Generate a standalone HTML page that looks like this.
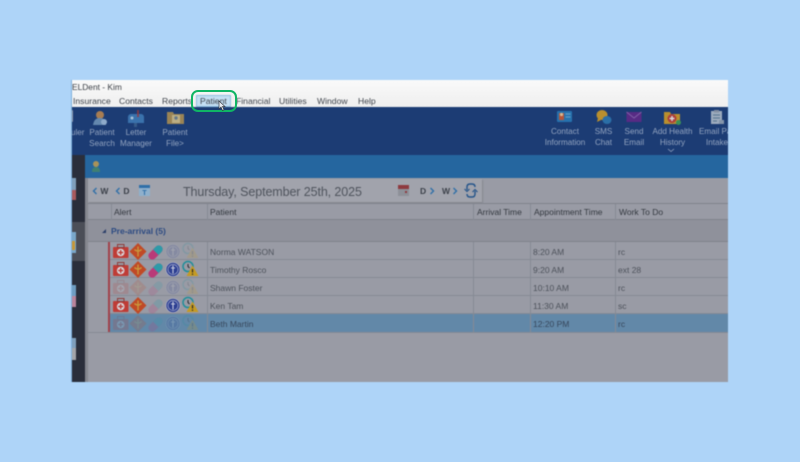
<!DOCTYPE html>
<html><head><meta charset="utf-8">
<style>
html,body{margin:0;padding:0}
body{width:800px;height:462px;background:#aed4f8;position:relative;overflow:hidden;font-family:"Liberation Sans",sans-serif}
.a{position:absolute}
#win{position:absolute;left:0;top:0;width:800px;height:462px;filter:blur(.55px)}
.t{position:absolute;white-space:nowrap;line-height:12px}
.m{font-size:8.6px;color:#3f444c;top:95px}
.tb{font-size:8.1px;color:#93a4c0;text-align:center;line-height:11px;transform:translateX(-50%);top:126.5px}
.h{font-size:8.5px;color:#33383f;top:206px}
.c{font-size:8.5px;color:#4d525b}
.row{position:absolute;left:110px;width:618px;height:18px;border-bottom:1px solid #868a94;box-sizing:border-box}
.v{position:absolute;width:1px;background:#868a94}
.nav{position:absolute;top:185px;font-size:8.5px;line-height:12px;font-weight:bold;color:#3b4049;white-space:nowrap}
.nav svg{vertical-align:-1px}
</style></head><body>
<div id="win">
<div class="a" style="left:71px;top:80px;width:657px;height:27px;background:linear-gradient(#fafafa,#f3f3f3 60%,#efefef)"></div>
<div class="t" style="left:72px;top:81px;font-size:8.4px;color:#3c4047">ELDent - Kim</div>
<div class="a" style="left:196px;top:95px;width:35px;height:12px;background:#c4dff3;border:1px solid #8fbfe0;box-sizing:border-box"></div>
<div class="t m" style="left:73px">Insurance</div>
<div class="t m" style="left:119px">Contacts</div>
<div class="t m" style="left:162px">Reports</div>
<div class="t m" style="left:200px">Patient</div>
<div class="t m" style="left:236px">Financial</div>
<div class="t m" style="left:279px">Utilities</div>
<div class="t m" style="left:317px">Window</div>
<div class="t m" style="left:358px">Help</div>

<div class="a" style="left:71px;top:107px;width:657px;height:49px;background:#1c3c74"></div>
<div class="a" style="left:85px;top:155px;width:643px;height:23px;background:#25669f"></div>
<div class="a" style="left:72px;top:155px;width:13px;height:227px;background:#2a2e3b"></div>
<div class="a" style="left:72px;top:222px;width:13px;height:39px;background:#4b4e57"></div>
<div class="a" style="left:85px;top:178px;width:643px;height:204px;background:#999ba5"></div>
<div class="a" style="left:85px;top:178px;width:3px;height:204px;background:#85878f"></div>
<div class="a" style="left:72px;top:178px;width:4px;height:13px;background:#7f9fbc"></div>
<div class="a" style="left:72px;top:190px;width:4px;height:10px;background:#a85a5e"></div>
<div class="a" style="left:72px;top:232px;width:4px;height:21px;background:#7aa7c9"></div>
<div class="a" style="left:72px;top:241px;width:3px;height:9px;background:#c69636"></div>
<div class="a" style="left:72px;top:285px;width:4px;height:11px;background:#6e9dc2"></div>
<div class="a" style="left:72px;top:296px;width:4px;height:11px;background:#b9849c"></div>
<div class="a" style="left:72px;top:338px;width:4px;height:10px;background:#7f9fbc"></div>
<div class="a" style="left:72px;top:348px;width:4px;height:12px;background:#a3a5aa"></div>

<!-- toolbar left -->
<svg class="a" style="left:71px;top:107px" width="140" height="22" viewBox="0 0 140 22">
<rect x="-2" y="3" width="4" height="12" rx="1" fill="#8d97ab"/>
<circle cx="29" cy="8" r="4" fill="#a87d52"/><path d="M22 18c1-6 4-7 7-7s6 2 6 7z" fill="#6488ae"/><circle cx="33" cy="15" r="3" fill="#8fabca"/>
<path d="M57 16V10a3 3 0 0 1 3-3h10a3 3 0 0 1 3 3v6z" fill="#3a72ac"/><rect x="63" y="16" width="3" height="4" fill="#355a88"/><path d="M67 3v7" stroke="#93383f" stroke-width="1.500"/><circle cx="61" cy="11" r="1.500" fill="#a9c0d8"/>
<path d="M96 5h6l1 2h10v10H96z" fill="#9a8455"/><rect x="101" y="8" width="8" height="8" fill="#bcae84"/><circle cx="105" cy="11" r="1.700" fill="#65788a"/>
</svg>
<div class="t" style="left:71px;top:126.500px;font-size:8.100px;line-height:11px;color:#93a4c0">uler</div>
<div class="t tb" style="left:102px">Patient<br>Search</div>
<div class="t tb" style="left:136px">Letter<br>Manager</div>
<div class="t tb" style="left:175px">Patient<br>File&gt;</div>
<!-- toolbar right -->
<svg class="a" style="left:550px;top:107px" width="178" height="32" viewBox="0 0 178 32">
<rect x="7" y="4" width="15" height="11" rx="1" fill="#2672ae"/><rect x="9" y="6" width="5" height="7" fill="#b5553a"/><circle cx="11.500" cy="7.500" r="1.600" fill="#d2b995"/><path d="M15.500 7h5M15.500 10h5" stroke="#5f9ac6" stroke-width="1.200"/>
<ellipse cx="52" cy="8" rx="5.500" ry="5" fill="#b98f2e"/><path d="M48 11l-1 4 4-2z" fill="#b98f2e"/><ellipse cx="57" cy="13" rx="4.500" ry="4" fill="#2b6fa7"/>
<rect x="76.500" y="5" width="15" height="10" fill="#572b84"/><path d="M76.500 5l7.500 6 7.500-6" fill="none" stroke="#7f5fa8" stroke-width="1"/>
<path d="M114 5h6l1 2h9v10h-16z" fill="#b98f2e"/><circle cx="122" cy="11.500" r="4.500" fill="#ab3e3a"/><path d="M122 9v5M119.500 11.500h5" stroke="#d8d8dd" stroke-width="1.500"/><circle cx="128.500" cy="15.500" r="2.500" fill="#3a9058"/>
<rect x="161" y="4" width="11" height="13" fill="#9dabbd"/><rect x="164" y="3" width="5" height="2.500" fill="#8590a2"/><path d="M163 8h7M163 11h7M163 14h4" stroke="#567490" stroke-width="1"/><rect x="169" y="13" width="5" height="4" fill="#8595aa"/>
</svg>
<div class="t tb" style="left:565px;top:126px">Contact<br>Information</div>
<div class="t tb" style="left:603.500px;top:126px">SMS<br>Chat</div>
<div class="t tb" style="left:634px;top:126px">Send<br>Email</div>
<div class="t tb" style="left:672.500px;top:126px">Add Health<br>History</div>
<div class="t" style="left:699px;top:126px;font-size:8.100px;color:#93a4c0;line-height:11px;width:29px;overflow:hidden;text-align:left">Email Pat<br><span style="margin-left:7px">Intake</span></div>
<svg class="a" style="left:667px;top:148px" width="8" height="5"><path d="M1 1l3 2.500L7 1" fill="none" stroke="#93a4c0" stroke-width=".8"/></svg>

<!-- bar icon -->
<svg class="a" style="left:90px;top:160px" width="12" height="13" viewBox="0 0 12 13"><circle cx="6" cy="4" r="3" fill="#a8925a"/><path d="M2 12c0-4 2-5 4-5s4 1 4 5z" fill="#3f7f72"/></svg>

<!-- date bar -->
<div class="a" style="left:88px;top:179px;width:394px;height:23px;background:#a1a3ac;box-shadow:1px 1px 1px #85878f"></div>
<div class="nav" style="left:92px"><svg width="6" height="8"><path d="M4.500 1L1.500 4l3 3" fill="none" stroke="#2f6fa8" stroke-width="1.400"/></svg> W</div>
<div class="nav" style="left:115px"><svg width="6" height="8"><path d="M4.500 1L1.500 4l3 3" fill="none" stroke="#2f6fa8" stroke-width="1.400"/></svg> D</div>
<svg class="a" style="left:138px;top:184px" width="13" height="13"><rect x="1" y="1" width="11" height="11" fill="#8fb0cc"/><rect x="1" y="1" width="11" height="3" fill="#2f6fa8"/><text x="6.500" y="11" font-size="7" font-weight="bold" text-anchor="middle" fill="#2f6fa8" font-family="Liberation Sans">T</text></svg>
<div class="t" style="left:183px;top:184px;font-size:12.500px;line-height:16px;color:#4f545d;letter-spacing:-.1px">Thursday, September 25th, 2025</div>
<svg class="a" style="left:397px;top:184px" width="13" height="13"><rect x="1" y="1" width="11" height="11" fill="#8d9098"/><rect x="1" y="1" width="11" height="4" fill="#8e3a40"/><rect x="8" y="7" width="2" height="2" fill="#8e3a40"/></svg>
<div class="nav" style="left:420px">D <svg width="6" height="8"><path d="M1.500 1L4.500 4l-3 3" fill="none" stroke="#2f6fa8" stroke-width="1.400"/></svg></div>
<div class="nav" style="left:442px">W <svg width="6" height="8"><path d="M1.500 1L4.500 4l-3 3" fill="none" stroke="#2f6fa8" stroke-width="1.400"/></svg></div>
<svg class="a" style="left:464px;top:182px" width="14" height="17" viewBox="0 0 14 17"><path d="M3 8V5c0-2 1-3 3-3h2c2 0 3 1 3 3M11 9v3c0 2-1 3-3 3H6c-2 0-3-1-3-3" fill="none" stroke="#24548a" stroke-width="1.400"/><path d="M0.500 7l2.500 2.500L5.500 7M8.500 10l2.500-2.500L13.500 10" fill="none" stroke="#24548a" stroke-width="1.100"/></svg>

<!-- grid header -->
<div class="a" style="left:88px;top:203px;width:640px;height:17px;background:#999ba5;border-top:1px solid #80838c;border-bottom:1px solid #80838c;box-sizing:border-box"></div>
<div class="v" style="left:111px;top:204px;height:16px"></div>
<div class="v" style="left:207px;top:204px;height:16px"></div>
<div class="v" style="left:473px;top:204px;height:16px"></div>
<div class="v" style="left:530px;top:204px;height:16px"></div>
<div class="v" style="left:615px;top:204px;height:16px"></div>
<div class="t h" style="left:114px">Alert</div>
<div class="t h" style="left:210px">Patient</div>
<div class="t h" style="left:477px">Arrival Time</div>
<div class="t h" style="left:534px">Appointment Time</div>
<div class="t h" style="left:619px">Work To Do</div>
<!-- group -->
<div class="a" style="left:88px;top:220px;width:640px;height:22px;background:#8f919b;border-bottom:1px solid #80838c;box-sizing:border-box"></div>
<svg class="a" style="left:101px;top:228px" width="6" height="6"><path d="M5 1v4H1z" fill="#2c3f6a"/></svg>
<div class="t" style="left:111px;top:225px;font-size:8.500px;font-weight:bold;color:#2c4a82">Pre-arrival (5)</div>
<!-- rows -->
<div class="a" style="left:88px;top:242px;width:22px;height:90px;background:#999ba5"></div>
<div class="row" style="top:242px"></div>
<div class="row" style="top:260px"></div>
<div class="row" style="top:278px"></div>
<div class="row" style="top:296px"></div>
<div class="row" style="top:314px;background:#6288a8;height:18px;border:0"></div>
<div class="a" style="left:88px;top:332px;width:640px;height:1px;background:#868a94"></div>
<div class="a" style="left:108px;top:242px;width:2px;height:90px;background:#a2414a"></div>
<div class="v" style="left:207px;top:242px;height:90px"></div>
<div class="v" style="left:473px;top:242px;height:90px"></div>
<div class="v" style="left:530px;top:242px;height:90px"></div>
<div class="v" style="left:615px;top:242px;height:90px"></div>

<svg class="a" style="left:112px;top:242px" width="90" height="90" viewBox="0 0 90 90">
<defs>
<g id="k"><rect x="1" y="5" width="15.500" height="11" rx="1" fill="#bf3c36"/><rect x="5.500" y="2.500" width="6.500" height="3" fill="none" stroke="#8f3a38"/><circle cx="8.700" cy="10.500" r="3.800" fill="#d8d9de"/><path d="M8.700 8v5M6.200 10.500h5" stroke="#bf3c36" stroke-width="1.400"/></g>
<g id="d"><path d="M26 1l8.500 8.500L26 18l-8.500-8.500z" fill="#c04a26"/><path d="M26 4.500v10M22.500 7.500c2 2 5 2 7 0" stroke="#c99a3e" stroke-width="1.300" fill="none"/></g>
<g id="p"><path d="M37.500 11l6.500-6.500a3.800 3.800 0 0 1 5.500 5.500L43 16.500a3.800 3.800 0 0 1-5.500-5.500z" fill="#b93a78"/><path d="M41 7.500l3-3a3.800 3.800 0 0 1 5.500 5.500l-3 3z" fill="#2d9aa8"/></g>
<g id="c"><circle cx="61" cy="9.500" r="7" fill="#2d3f92" stroke="#b8bcd0" stroke-width=".6"/><circle cx="61" cy="9.500" r="5" fill="none" stroke="#a9b0d0" stroke-width=".7"/><path d="M61 5.500v8M59 8h4" stroke="#c9cde0" stroke-width="1.100"/></g>
<g id="w"><circle cx="76" cy="6.500" r="5" fill="none" stroke="#1f8e9a" stroke-width="1.500"/><path d="M76 4v2.500l1.500 1.500" stroke="#26292f" stroke-width="1" fill="none"/><path d="M80.500 5.500l6 10.500h-12z" fill="#c59a22"/><path d="M80.500 9v3.500M80.500 13.500v1.200" stroke="#2a2a2a" stroke-width="1.200"/></g>
</defs>
<g><use href="#k"/><use href="#d"/><use href="#p"/><use href="#c" opacity=".18"/><use href="#w" opacity=".18"/></g>
<g transform="translate(0 18)"><use href="#k"/><use href="#d"/><use href="#p"/><use href="#c"/><use href="#w"/></g>
<g transform="translate(0 36)" opacity=".18"><use href="#k"/><use href="#d"/><use href="#p"/><use href="#c"/><use href="#w"/></g>
<g transform="translate(0 54)"><use href="#k"/><use href="#d"/><use href="#p" opacity=".22"/><use href="#c"/><use href="#w"/></g>
<g transform="translate(0 72)" opacity=".2"><use href="#k"/><use href="#d"/><use href="#p"/><use href="#c"/><use href="#w"/></g>
</svg>

<div class="t c" style="left:210px;top:246px">Norma WATSON</div>
<div class="t c" style="left:210px;top:264px">Timothy Rosco</div>
<div class="t c" style="left:210px;top:282px">Shawn Foster</div>
<div class="t c" style="left:210px;top:300px">Ken Tam</div>
<div class="t c" style="left:210px;top:318px;color:#37475c">Beth Martin</div>
<div class="t c" style="left:533px;top:246px">8:20 AM</div>
<div class="t c" style="left:533px;top:264px">9:20 AM</div>
<div class="t c" style="left:533px;top:282px">10:10 AM</div>
<div class="t c" style="left:533px;top:300px">11:30 AM</div>
<div class="t c" style="left:533px;top:318px;color:#37475c">12:20 PM</div>
<div class="t c" style="left:618px;top:246px">rc</div>
<div class="t c" style="left:618px;top:264px">ext 28</div>
<div class="t c" style="left:618px;top:282px">rc</div>
<div class="t c" style="left:618px;top:300px">sc</div>
<div class="t c" style="left:618px;top:318px;color:#37475c">rc</div>

<div class="a" style="left:71px;top:80px;width:1px;height:302px;background:#7fb0dc"></div>
</div>
<!-- highlight -->
<div class="a" style="left:190.500px;top:90px;width:46.500px;height:22px;border:2px solid #10b565;border-radius:7px;box-sizing:border-box"></div>
<svg class="a" style="left:218px;top:100px" width="9" height="12" viewBox="0 0 9 12"><path d="M1 1v8l2-2 1.500 3.500 1.500-.7L4.500 6.500H7z" fill="#e9edf2" stroke="#3b4049" stroke-width=".7"/></svg>
</body></html>
